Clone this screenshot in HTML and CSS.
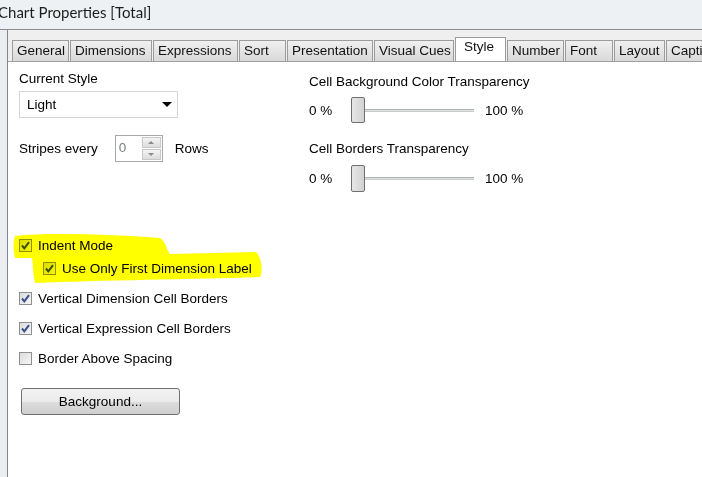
FILE: index.html
```html
<!DOCTYPE html>
<html>
<head>
<meta charset="utf-8">
<link rel="stylesheet" href="styles.css">
</head>
<body>
<div class="titlebar">Chart Properties [Total]</div>
<div class="frame">
  <div class="strip"></div>
  <div class="main">
    <div class="tabs">
      <div class="tab w-general">General</div>
      <div class="tab w-dim">Dimensions</div>
      <div class="tab w-expr">Expressions</div>
      <div class="tab w-sort">Sort</div>
      <div class="tab w-pres">Presentation</div>
      <div class="tab w-cues">Visual Cues</div>
      <div class="tab active w-style">Style</div>
      <div class="tab w-num">Number</div>
      <div class="tab w-font">Font</div>
      <div class="tab w-layout">Layout</div>
      <div class="tab last">Caption</div>
    </div>
    <div class="panel">
      <div class="top">
        <div class="col-left">
          <div class="label">Current Style</div>
          <div class="select"><span>Light</span><span class="arrow"></span></div>
          <div class="stripes">
            <span class="label">Stripes every</span>
            <div class="spin">
              <span class="spin-val">0</span>
              <div class="spin-btns">
                <div class="spin-btn"><span class="tri-up"></span></div>
                <div class="spin-btn"><span class="tri-down"></span></div>
              </div>
            </div>
            <span class="label">Rows</span>
          </div>
        </div>
        <div class="col-right">
          <div class="label r1">Cell Background Color Transparency</div>
          <div class="slider s1">
            <span class="pct">0 %</span>
            <span class="thumb"></span>
            <span class="track"></span>
            <span class="pct max">100 %</span>
          </div>
          <div class="label r2">Cell Borders Transparency</div>
          <div class="slider s2">
            <span class="pct">0 %</span>
            <span class="thumb"></span>
            <span class="track"></span>
            <span class="pct max">100 %</span>
          </div>
        </div>
      </div>
      <div class="checks">
        <div class="check c1"><span class="box"><svg viewBox="0 0 11 11"><path d="M2 5.5 L4.3 8.3 L9 2.2" /></svg></span>Indent Mode</div>
        <div class="check c2 sub"><span class="box"><svg viewBox="0 0 11 11"><path d="M2 5.5 L4.3 8.3 L9 2.2" /></svg></span>Use Only First Dimension Label</div>
        <div class="check c3"><span class="box"><svg viewBox="0 0 11 11"><path d="M2 5.5 L4.3 8.3 L9 2.2" /></svg></span>Vertical Dimension Cell Borders</div>
        <div class="check c3"><span class="box"><svg viewBox="0 0 11 11"><path d="M2 5.5 L4.3 8.3 L9 2.2" /></svg></span>Vertical Expression Cell Borders</div>
        <div class="check c3"><span class="box empty"></span>Border Above Spacing</div>
      </div>
      <button class="btn">Background...</button>
    </div>
  </div>
</div>
<svg class="highlight" width="280" height="290" viewBox="0 0 280 290">
  <path d="M15 236 C 50 232, 120 235, 160 238 C 167 243, 166 250, 170 254 L 256 252 C 262 258, 263 271, 260 277 C 200 279, 100 280, 35 283 C 33 274, 33 264, 32 258 L 15 258 C 13 250, 13 242, 15 236 Z"/>
</svg>
</body>
</html>
```
FILE: styles.css
```css
* { box-sizing: border-box; }
html, body { margin: 0; padding: 0; }
body {
  width: 702px;
  height: 477px;
  overflow: hidden;
  background: #ffffff;
  font-family: "Liberation Sans", Arial, sans-serif;
  font-size: 13.5px;
  color: #000;
}
.titlebar {
  height: 29px;
  background: #eef1f3;
  font-family: Lato, "Noto Sans", sans-serif;
  font-size: 15px;
  line-height: 25px;
  color: #1c1c1c;
  text-indent: -2px;
  white-space: nowrap;
}
.frame {
  display: flex;
  height: 448px;
  border-top: 1px solid #8a8d92;
}
.strip {
  width: 8px;
  background: #ecedf0;
  border-right: 1px solid #7e8796;
  flex: none;
}
.main {
  flex: 1;
  display: flex;
  flex-direction: column;
  min-width: 0;
}
.tabs {
  display: flex;
  gap: 1px;
  background: #efefef;
  padding: 10px 0 0 4px;
  height: 32px;
  border-bottom: 1px solid #a0a0a0;
  white-space: nowrap;
  overflow: hidden;
  align-items: flex-end;
}
.tab {
  flex: none;
  height: 21px;
  padding: 0 0 0 4px;
  line-height: 19px;
  font-size: 13.5px;
  border: 1px solid #9c9c9c;
  border-bottom: none;
  background: linear-gradient(#f0f0f0, #d9d9d9);
  color: #111;
  overflow: hidden;
}
.w-general { width: 57px; }
.w-dim { width: 82px; }
.w-expr { width: 85px; }
.w-sort { width: 47px; }
.w-pres { width: 86px; }
.w-cues { width: 80px; }
.w-style { width: 51px; }
.w-num { width: 57px; }
.w-font { width: 48px; }
.w-layout { width: 51px; }
.tab.last { width: 60px; }
.tab.active {
  background: #fff;
  line-height: 18px;
  padding-left: 8px;
  margin-bottom: -1px;
  height: 25px;
}
.panel {
  flex: 1;
  background: #fff;
  padding: 9px 0 0 11px;
}
.top {
  display: grid;
  grid-template-columns: 290px 1fr;
}
.label { line-height: 16px; white-space: nowrap; }
.select {
  margin-top: 4px;
  width: 159px;
  height: 27px;
  border: 1px solid #d6d6d6;
  display: flex;
  align-items: center;
  justify-content: space-between;
  padding: 0 5px 0 7px;
}
.arrow {
  width: 0; height: 0;
  border-left: 5px solid transparent;
  border-right: 5px solid transparent;
  border-top: 5px solid #000;
}
.stripes {
  margin-top: 17px;
  display: flex;
  align-items: center;
  height: 27px;
}
.spin {
  margin-left: 17px;
  width: 48px;
  height: 27px;
  border: 1px solid #a9a9a9;
  display: flex;
  justify-content: space-between;
  padding: 1px;
}
.spin-val { color: #7a8080; padding-left: 2px; line-height: 22px; }
.spin-btns { width: 19px; display: flex; flex-direction: column; gap: 1px; }
.spin-btn {
  flex: 1;
  border: 1px solid #c8c8c8;
  background: linear-gradient(#f4f4f4, #dcdcdc);
  display: flex; align-items: center; justify-content: center;
}
.tri-up { border-left: 3px solid transparent; border-right: 3px solid transparent; border-bottom: 3px solid #8a8a8a; }
.tri-down { border-left: 3px solid transparent; border-right: 3px solid transparent; border-top: 3px solid #8a8a8a; }
.stripes .label:last-child { margin-left: 12px; }
.r1 { margin-top: 3px; }
.r2 { margin-top: 18px; }
.slider {
  display: flex;
  align-items: center;
  height: 26px;
}
.s1 { margin-top: 7px; }
.s2 { margin-top: 8px; height: 27px; }
.pct { width: 42px; }
.pct.max { width: auto; margin-left: 11px; }
.thumb {
  width: 14px;
  height: 100%;
  border: 1px solid #6f6f6f;
  border-radius: 2px;
  background: linear-gradient(90deg, #e6e6e6, #d2d2d2);
}
.track {
  width: 109px;
  height: 3px;
  background: #dfe3e3;
  border-top: 1px solid #aab2b2;
  border-bottom: 1px solid #c6cccc;
}
.checks { margin-top: 45px; display: flex; flex-direction: column; }
.check { display: flex; align-items: center; height: 16px; white-space: nowrap; }
.c2 { margin-top: 7px; padding-left: 24px; }
.c3 { margin-top: 14px; }
.box {
  width: 13px; height: 13px;
  border: 1px solid #8f8f8f;
  background: linear-gradient(135deg, #dcdcdc, #f6f6f6);
  margin: 0 6px 0 0;
  padding: 0;
  display: flex;
}
.box svg { width: 11px; height: 11px; }
.box path { fill: none; stroke: #3b4f8c; stroke-width: 2; }
.btn {
  display: block;
  margin: 22px 0 0 2px;
  width: 159px;
  height: 27px;
  border: 1px solid #707070;
  border-radius: 3px;
  background: linear-gradient(#f2f2f2 0%, #ebebeb 50%, #dddddd 51%, #cfcfcf 100%);
  font-family: "Liberation Sans", Arial, sans-serif;
  font-size: 13.5px;
  color: #000;
  padding: 0;
}
.highlight {
  position: absolute;
  left: 0; top: 0;
  mix-blend-mode: multiply;
  pointer-events: none;
}
.highlight path { fill: #ffff00; }
```
